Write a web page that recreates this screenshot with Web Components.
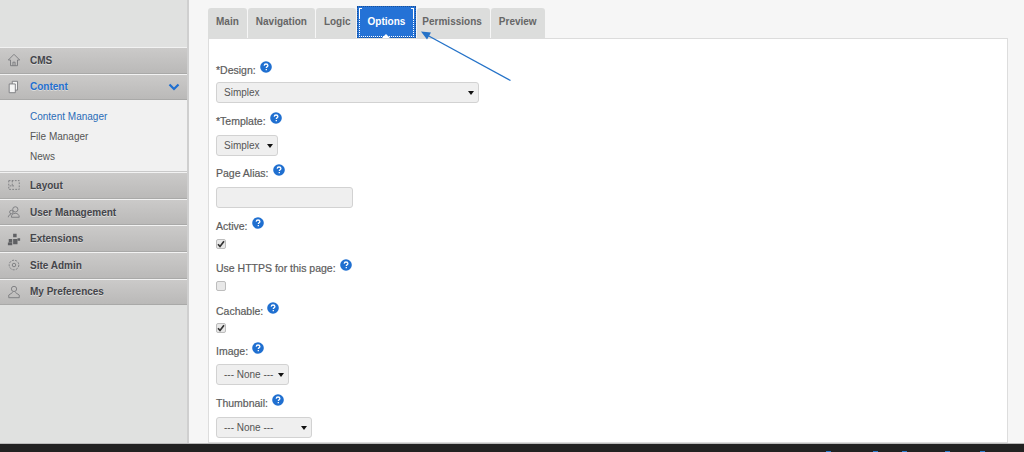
<!DOCTYPE html>
<html>
<head>
<meta charset="utf-8">
<title>Options</title>
<style>
  html, body { margin: 0; height: 100%; }
  body { width: 1024px; height: 452px; overflow: hidden; font-family: "Liberation Sans", Arial, sans-serif; background: #f6f6f6; }
</style>
</head>
<body>
<admin-shell>
  <side-nav slot="side">
    <nav-item label="CMS" icon="home"></nav-item>
    <nav-item label="Content" icon="pages" open>
      <sub-link current>Content Manager</sub-link>
      <sub-link>File Manager</sub-link>
      <sub-link>News</sub-link>
    </nav-item>
    <nav-item label="Layout" icon="layout"></nav-item>
    <nav-item label="User Management" icon="users"></nav-item>
    <nav-item label="Extensions" icon="puzzle"></nav-item>
    <nav-item label="Site Admin" icon="gear"></nav-item>
    <nav-item label="My Preferences" icon="person"></nav-item>
  </side-nav>
  <tab-bar slot="tabs">
    <tab-button>Main</tab-button>
    <tab-button>Navigation</tab-button>
    <tab-button style="padding-right:5px">Logic</tab-button>
    <tab-button active>Options</tab-button>
    <tab-button style="padding-left:5px">Permissions</tab-button>
    <tab-button>Preview</tab-button>
  </tab-bar>
  <form-panel slot="panel">
    <form-field label="*Design:" gap="5" after="11"><fake-select width="263">Simplex</fake-select></form-field>
    <form-field label="*Template:" gap="7" after="10"><fake-select width="62">Simplex</fake-select></form-field>
    <form-field label="Page Alias:" gap="7" after="11"><text-box></text-box></form-field>
    <form-field label="Active:" gap="6" after="12"><check-box checked></check-box></form-field>
    <form-field label="Use HTTPS for this page:" gap="6" after="13"><check-box></check-box></form-field>
    <form-field label="Cachable:" gap="5" after="11"><check-box checked></check-box></form-field>
    <form-field label="Image:" gap="6" after="11"><fake-select width="73">--- None ---</fake-select></form-field>
    <form-field label="Thumbnail:" gap="7" after="0"><fake-select width="96">--- None ---</fake-select></form-field>
  </form-panel>
</admin-shell>

<script>
  const ICONS = {
    home: '<path d="M8 1.500 1.500 8H4v6.500h8V8h2.500z"/><path d="M6.800 14.500v-4h2.400v4"/>',
    pages: '<path d="M6 1.500h6v10H6z" fill="#f4f4f4"/><path d="M2.500 4.500h7v10h-7z" fill="#f4f4f4"/>',
    layout: '<path d="M2 3h12v10H2z" stroke-dasharray="2 1.500"/><path d="M6 3v6H2M6 9h3" stroke-dasharray="2 1.500"/>',
    users: '<circle cx="9.500" cy="5" r="3"/><path d="M5 14c0-3 2-4.500 4.500-4.500S14 11 14 14z"/><circle cx="5" cy="8" r="2"/><path d="M1.500 14c0-2 1.200-3 3-3"/>',
    puzzle: '<path d="M7 2h4v4H7zM2 8h4v4H2zM7 8h5v6H7z" fill="#5f6063" stroke="none"/><path d="M12 7h3v3h-3zM1 12h5v3H1z" fill="#5f6063" stroke="none"/>',
    gear: '<circle cx="8" cy="8" r="5.500" stroke-dasharray="2.500 1.300"/><circle cx="8" cy="8" r="2"/>',
    person: '<circle cx="8" cy="4.500" r="3"/><path d="M6.500 8.500 2 11.500v3h12v-3l-4.500-3"/>'
  };

  function shell(el, html) {
    el.attachShadow({ mode: 'open' }).innerHTML = html;
  }

  class AdminShell extends HTMLElement {
    constructor() {
      super();
      shell(this, `
        <style>
          :host { display: grid; grid-template-columns: 189px 1fr; grid-template-rows: 443px 9px; height: 452px; color: #555; }
          .main { padding: 6px 16px 0 19px; min-width: 0; display: flex; flex-direction: column; position: relative; overflow: hidden; }
          footer { grid-column: 1 / 3; background: #222; border-top: 1px solid #bbb; box-sizing: border-box; display: flex; justify-content: flex-end; padding: 7px 0 0; }
          footer i { width: 5px; height: 1px; background: #2f7fd0; }
          footer i:nth-child(1) { margin-right: 42px; }
          footer i:nth-child(2) { margin-right: 24px; }
          footer i:nth-child(3) { margin-right: 38px; }
          footer i:nth-child(4) { margin-right: 30px; }
          footer i:nth-child(5) { margin-right: 39px; }
          svg.arrow { position: absolute; left: 0; top: 0; pointer-events: none; }
        </style>
        <slot name="side"></slot>
        <div class="main">
          <slot name="tabs"></slot>
          <slot name="panel"></slot>
          <svg class="arrow" width="400" height="100" viewBox="189 0 400 100">
            <path d="M510.500 80.500 426 34.500" stroke="#2472c8" stroke-width="1.300" fill="none"/>
            <path d="M421 31.500 431 32.500 427 39.500z" fill="#2472c8"/>
          </svg>
        </div>
        <footer><i></i><i></i><i></i><i></i><i></i></footer>`);
    }
  }

  class SideNav extends HTMLElement {
    constructor() {
      super();
      shell(this, `
        <style>
          :host { display: block; box-sizing: border-box; padding-top: 47px; background: #e0e1e0; border-right: 2px solid #cfcfcf; height: 443px; }
        </style>
        <slot></slot>`);
    }
  }

  class NavItem extends HTMLElement {
    constructor() {
      super();
      const open = this.hasAttribute('open');
      shell(this, `
        <style>
          :host { display: block; }
          .head { height: 26.600px; box-sizing: border-box; display: flex; align-items: center; padding: 0 6px 0 7px; border-top: 1px solid #f2f2f2; border-bottom: 1px solid #a9a9a8;
            background: linear-gradient(#cbcac9, #bab9b8); font: bold 10px "Liberation Sans", Arial, sans-serif; color: ${open ? '#1f6fd0' : '#44454a'}; text-shadow: 0 1px 0 rgba(255,255,255,.45); }
          svg.i { width: 14px; height: 14px; margin-right: 9px; fill: none; stroke: #77787b; stroke-width: 1; flex: none; }
          .label { flex: 1; }
          .sub { background: #f1f1f1; padding: 7px 0 9px 30px; border-bottom: 1px solid #c9c9c9; height: 55px; }
          .chev { width: 12px; height: 8px; margin-right: 1px; }
        </style>
        <div class="head">
          <svg class="i" viewBox="0 0 16 16">${ICONS[this.getAttribute('icon')]}</svg>
          <span class="label">${this.getAttribute('label')}</span>
          ${open ? '<svg class="chev" viewBox="0 0 12 8"><path d="M1.500 1.500 6 6l4.500-4.500" stroke="#1f6fd0" stroke-width="2.200" fill="none"/></svg>' : ''}
        </div>
        ${open ? '<div class="sub"><slot></slot></div>' : ''}`);
    }
  }

  class SubLink extends HTMLElement {
    constructor() {
      super();
      shell(this, `
        <style>
          :host { display: block; height: 20px; line-height: 20px; font-size: 10px; color: ${this.hasAttribute('current') ? '#2a6cb8' : '#555'}; }
        </style>
        <slot></slot>`);
    }
  }

  class TabBar extends HTMLElement {
    constructor() {
      super();
      shell(this, `
        <style>
          :host { display: flex; align-items: flex-end; gap: 1px; height: 32px; flex: none; }
        </style>
        <slot></slot>`);
    }
  }

  class TabButton extends HTMLElement {
    constructor() {
      super();
      const active = this.hasAttribute('active');
      shell(this, `
        <style>
          :host { display: block; box-sizing: border-box; position: relative; height: ${active ? 32 : 30}px; padding: 0 8px; border-radius: 3px 3px 0 0;
            background: ${active ? '#2472d6' : '#dcdddc'}; color: ${active ? '#fff' : '#666'}; font: bold 10px/${active ? 31 : 27}px "Liberation Sans", Arial, sans-serif; ${active ? 'padding: 0 11px; outline: 1px dotted #1a4f96; outline-offset: -1px; border-radius: 0;' : ''} }
          .edge { position: absolute; inset: 2px 2px 1px 2px; border: dotted #fff; border-width: 0 1px 1px; }
          .edge::before, .edge::after { content: ""; position: absolute; top: 0; width: 2px; height: 10px; border-top: 1px solid #fff; }
          .edge::before { left: -1px; border-left: 1px solid #fff; }
          .edge::after { right: -1px; border-right: 1px solid #fff; }
          .tip { position: absolute; left: 50%; bottom: 0; margin-left: -4px; border: 4px solid transparent; border-top: 0; border-bottom-color: #fff; }
        </style>
        ${active ? '<span class="edge"></span><span class="tip"></span>' : ''}<slot></slot>`);
    }
  }

  class FormPanel extends HTMLElement {
    constructor() {
      super();
      shell(this, `
        <style>
          :host { display: block; flex: 1; min-height: 0; overflow: hidden; background: #fff; border: 1px solid #ddd; border-top: 1px solid #dcdcdc; padding: 24px 7px 0; }
        </style>
        <slot></slot>`);
    }
  }

  class FormField extends HTMLElement {
    constructor() {
      super();
      shell(this, `
        <style>
          :host { display: block; margin-bottom: ${this.getAttribute('after')}px; }
          .label { display: flex; align-items: flex-start; gap: 4px; height: 14px; margin-bottom: ${this.getAttribute('gap')}px; color: #5c5c5c; font-size: 10.500px; line-height: 14px; -webkit-text-stroke: .2px #5c5c5c; }
          svg { width: 12px; height: 12px; margin-top: -2px; }
        </style>
        <div class="label"><span>${this.getAttribute('label')}</span>
          <svg viewBox="0 0 12 12" aria-hidden="true"><circle cx="6" cy="6" r="5.800" fill="#1f6fd0"/><path d="M4.200 4.600C4.300 3.500 5 3 6 3c1.100 0 1.900.6 1.900 1.500 0 1.300-1.600 1.300-1.600 2.600M6.300 8.100v1.200" stroke="#fff" stroke-width="1.300" fill="none"/></svg>
        </div>
        <slot></slot>`);
    }
  }

  class FakeSelect extends HTMLElement {
    constructor() {
      super();
      shell(this, `
        <style>
          :host { display: flex; align-items: center; justify-content: space-between; box-sizing: border-box; width: ${this.getAttribute('width')}px; height: 21px; padding: 0 4px 0 7px;
            background: #efefef; border: 1px solid #d2d2d2; border-radius: 3px; font-size: 10px; color: #555; white-space: nowrap; }
          i { flex: none; width: 0; height: 0; border: 3px solid transparent; border-top: 4px solid #111; border-bottom: 0; }
        </style>
        <slot></slot><i></i>`);
    }
  }

  class TextBox extends HTMLElement {
    constructor() {
      super();
      shell(this, `
        <style>
          :host { display: block; box-sizing: border-box; width: 137px; height: 21px; background: #efefef; border: 1px solid #d2d2d2; border-radius: 3px; }
        </style>`);
    }
  }

  class CheckBox extends HTMLElement {
    constructor() {
      super();
      shell(this, `
        <style>
          :host { display: block; box-sizing: border-box; width: 10px; height: 10px; background: #e8e8e8; border: 1px solid #bdbdbd; border-radius: 2px; }
          svg { display: block; width: 8px; height: 8px; }
        </style>
        ${this.hasAttribute('checked') ? '<svg viewBox="0 0 8 8"><path d="M1 4.200 3 6.500 7 1.200" stroke="#333" stroke-width="1.700" fill="none"/></svg>' : ''}`);
    }
  }

  customElements.define('admin-shell', AdminShell);
  customElements.define('side-nav', SideNav);
  customElements.define('nav-item', NavItem);
  customElements.define('sub-link', SubLink);
  customElements.define('tab-bar', TabBar);
  customElements.define('tab-button', TabButton);
  customElements.define('form-panel', FormPanel);
  customElements.define('form-field', FormField);
  customElements.define('fake-select', FakeSelect);
  customElements.define('text-box', TextBox);
  customElements.define('check-box', CheckBox);
</script>
</body>
</html>
